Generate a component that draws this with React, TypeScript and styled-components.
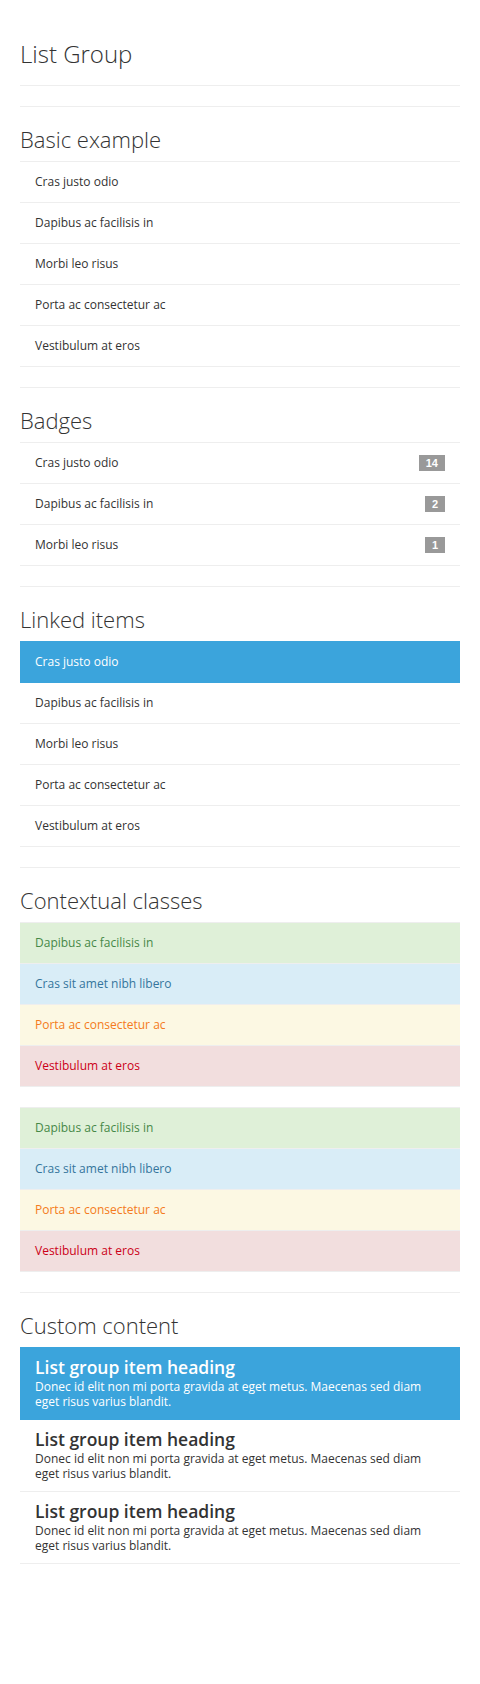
import React, { FC } from "react";
import styled, { createGlobalStyle, css } from "styled-components";

const GlobalStyle = createGlobalStyle`
  html, body {
    margin: 0;
    padding: 0;
    background: #ffffff;
  }
  body {
    font-family: "Open Sans", "Liberation Sans", sans-serif;
    font-size: 12px;
    color: #333333;
  }
`;

const Page = styled.div`
  padding: 0 20px 100px;
`;

const PageHeader = styled.header`
  padding: 39px 0 17px;
  border-bottom: 1px solid #eeeeee;
  margin-bottom: 20px;
`;

const Title = styled.h1`
  margin: 0;
  font-size: 24px;
  line-height: 29px;
  font-weight: 300;
  color: #333333;
`;

const Section = styled.section`
  border-top: 1px solid #eeeeee;
`;

const SectionTitle = styled.h2`
  margin: 19px 0 9px;
  font-size: 22px;
  line-height: 26px;
  font-weight: 300;
  color: #333333;
`;

const ListGroup = styled.div`
  display: flex;
  flex-direction: column;
  border-top: 1px solid #eeeeee;
  margin-bottom: 20px;
`;

type Variant = "default" | "active" | "success" | "info" | "warning" | "danger";

const variants: Record<Variant, { bg: string; fg: string }> = {
  default: { bg: "#ffffff", fg: "#333333" },
  active: { bg: "#3ba4dc", fg: "#ffffff" },
  success: { bg: "#dff0d8", fg: "#468847" },
  info: { bg: "#d9edf7", fg: "#34759c" },
  warning: { bg: "#fcf8e3", fg: "#f47b20" },
  danger: { bg: "#f2dede", fg: "#cc0018" },
};

const Item = styled.div<{ $variant: Variant }>`
  display: flex;
  align-items: center;
  justify-content: space-between;
  padding: 10px 15px;
  font-size: 12px;
  line-height: 20px;
  border-bottom: 1px solid #eeeeee;
  background: ${(p) => variants[p.$variant].bg};
  color: ${(p) => variants[p.$variant].fg};
  ${(p) =>
    p.$variant === "active" &&
    css`
      border-bottom-color: #3ba4dc;
      margin-top: -1px;
      border-top: 1px solid #3ba4dc;
    `}
`;

const Badge = styled.span`
  display: inline-block;
  padding: 0 7px;
  height: 16px;
  line-height: 16px;
  font-family: "Liberation Sans", Arial, sans-serif;
  font-size: 11px;
  font-weight: 700;
  color: #ffffff;
  background: #999999;
`;

const RichItem = styled.div<{ $active?: boolean }>`
  padding: 10px 15px;
  border-bottom: 1px solid ${(p) => (p.$active ? "#3ba4dc" : "#eeeeee")};
  background: ${(p) => (p.$active ? "#3ba4dc" : "#ffffff")};
  color: ${(p) => (p.$active ? "#ffffff" : "#333333")};
  ${(p) =>
    p.$active &&
    css`
      margin-top: -1px;
      border-top: 1px solid #3ba4dc;
    `}
`;

const ItemHeading = styled.h4`
  margin: 0 0 3px;
  font-size: 17.5px;
  line-height: 18px;
  font-weight: 600;
  color: inherit;
`;

const ItemText = styled.p`
  margin: 0;
  font-size: 12px;
  line-height: 15px;
`;

const basic = [
  "Cras justo odio",
  "Dapibus ac facilisis in",
  "Morbi leo risus",
  "Porta ac consectetur ac",
  "Vestibulum at eros",
];

const badges: Array<[string, number]> = [
  ["Cras justo odio", 14],
  ["Dapibus ac facilisis in", 2],
  ["Morbi leo risus", 1],
];

const contextual: Array<[string, Variant]> = [
  ["Dapibus ac facilisis in", "success"],
  ["Cras sit amet nibh libero", "info"],
  ["Porta ac consectetur ac", "warning"],
  ["Vestibulum at eros", "danger"],
];

const ContextualList: FC = () => (
  <ListGroup>
    {contextual.map(([label, v]) => (
      <Item key={label} $variant={v}>
        {label}
      </Item>
    ))}
  </ListGroup>
);

const App: FC = () => {
  return (
    <>
      <GlobalStyle />
      <Page>
        <PageHeader>
          <Title>List Group</Title>
        </PageHeader>

        <Section>
          <SectionTitle>Basic example</SectionTitle>
          <ListGroup>
            {basic.map((label) => (
              <Item key={label} $variant="default">
                {label}
              </Item>
            ))}
          </ListGroup>
        </Section>

        <Section>
          <SectionTitle>Badges</SectionTitle>
          <ListGroup>
            {badges.map(([label, count]) => (
              <Item key={label} $variant="default">
                {label}
                <Badge>{count}</Badge>
              </Item>
            ))}
          </ListGroup>
        </Section>

        <Section>
          <SectionTitle>Linked items</SectionTitle>
          <ListGroup>
            {basic.map((label, i) => (
              <Item key={label} $variant={i === 0 ? "active" : "default"}>
                {label}
              </Item>
            ))}
          </ListGroup>
        </Section>

        <Section>
          <SectionTitle>Contextual classes</SectionTitle>
          <ContextualList />
          <ContextualList />
        </Section>

        <Section>
          <SectionTitle>Custom content</SectionTitle>
          <ListGroup>
            {[0, 1, 2].map((i) => (
              <RichItem key={i} $active={i === 0}>
                <ItemHeading>List group item heading</ItemHeading>
                <ItemText>
                  Donec id elit non mi porta gravida at eget metus. Maecenas sed
                  diam eget risus varius blandit.
                </ItemText>
              </RichItem>
            ))}
          </ListGroup>
        </Section>
      </Page>
    </>
  );
};

export default App;
